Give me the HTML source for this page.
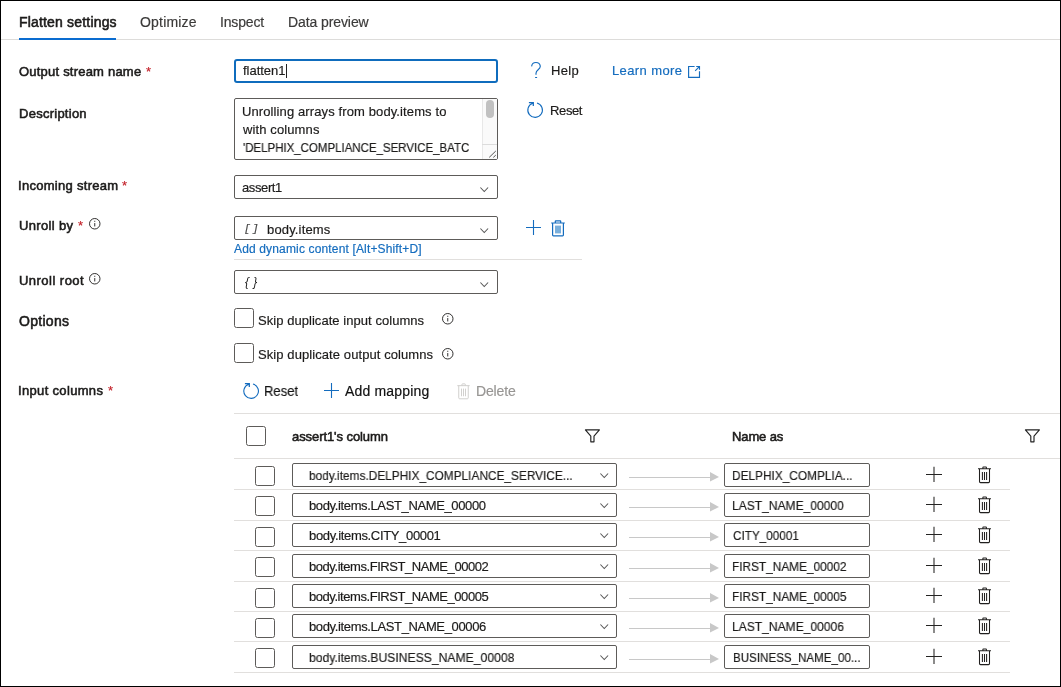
<!DOCTYPE html>
<html><head><meta charset="utf-8"><title>Flatten settings</title>
<style>
html,body{margin:0;padding:0;background:#fff;}
body{width:1061px;height:687px;position:relative;overflow:hidden;font-family:"Liberation Sans",sans-serif;}
.t{position:absolute;white-space:nowrap;line-height:1;will-change:transform;-webkit-text-stroke:0.18px currentColor;}
.s{-webkit-text-stroke:0.55px currentColor;}
.b{position:absolute;box-sizing:border-box;}
.box{border:1px solid #5d5b59;border-radius:2px;background:#fff;}
.ln{position:absolute;height:1px;background:#e1dfdd;}
svg{position:absolute;overflow:visible;}
</style></head><body>

<div class="b" style="left:0;top:0;width:1061px;height:687px;border:1px solid #000;z-index:5;pointer-events:none"></div>
<div class="ln" style="left:0;top:39px;width:1061px;background:#dddcda"></div>
<div class="b" style="left:19px;top:38px;width:97px;height:2px;background:#0a6cd0"></div>
<div class="b" style="left:234px;top:59px;width:264px;height:24px;border:2px solid #0f6cbd;border-radius:3px"></div>
<div class="b" style="left:286px;top:64px;width:1px;height:14px;background:#222"></div>
<div class="b box" style="left:234px;top:98px;width:264px;height:62px"></div>
<div class="b" style="left:482px;top:99px;width:15px;height:60px;background:#fafafa;border-left:1px solid #e8e8e8"></div>
<div class="b" style="left:486px;top:100px;width:8px;height:18px;background:#c1c1c1;border-radius:4px"></div>
<div class="b" style="left:482px;top:144px;width:15px;height:1px;background:#dcdcdc"></div>
<svg style="left:484px;top:146px" width="13" height="13"><path d="M5.2 11.4L11.8 5M9.3 11.4L11.8 9.1" stroke="#555" stroke-width="1" fill="none"/></svg>
<div class="b box" style="left:234px;top:175px;width:264px;height:24px"></div>
<svg style="left:479.6px;top:186.6px" width="9" height="6"><path d="M0.4 0.5L4.25 4.5L8.1 0.5" stroke="#555" stroke-width="1.05" fill="none"/></svg>
<div class="b box" style="left:234px;top:216px;width:264px;height:24px"></div>
<svg style="left:479.6px;top:227.6px" width="9" height="6"><path d="M0.4 0.5L4.25 4.5L8.1 0.5" stroke="#555" stroke-width="1.05" fill="none"/></svg>
<div class="b box" style="left:234px;top:270px;width:264px;height:24px"></div>
<svg style="left:479.6px;top:281.6px" width="9" height="6"><path d="M0.4 0.5L4.25 4.5L8.1 0.5" stroke="#555" stroke-width="1.05" fill="none"/></svg>
<div class="t" style="left:244.3px;top:223.2px;font:italic 11px 'Liberation Mono',monospace;color:#444;letter-spacing:1.5px">[]</div>
<div class="t" style="left:244.6px;top:274.6px;font:italic 12px 'Liberation Sans',sans-serif;color:#222;letter-spacing:4.3px;-webkit-text-stroke:0">{}</div>
<div class="ln" style="left:234px;top:259px;width:348px;"></div>
<svg style="left:526px;top:220px" width="15" height="15"><path d="M7.5 0V15M0 7.5H15" stroke="#146cbe" stroke-width="1.1" fill="none"/></svg>
<svg style="left:551px;top:219.5px" width="14" height="17"><path d="M0.2 3H13.8M4.3 2.8V1.3Q4.3 0.8 4.8 0.8H9.2Q9.7 0.8 9.7 1.3V2.8M1.6 3.2V15Q1.6 15.8 2.4 15.8H11.6Q12.4 15.8 12.4 15V3.2" stroke="#146cbe" stroke-width="1.2" fill="none"/><rect x="4" y="5.6" width="6" height="7.8" fill="#7aafdb"/></svg>
<svg style="left:88.9px;top:217.5px" width="11.5" height="11.5"><circle cx="5.75" cy="5.75" r="5.25" stroke="#323130" stroke-width="1" fill="none"/><path d="M5.75 5.05V8.45M5.75 2.75V3.85" stroke="#323130" stroke-width="1"/></svg>
<svg style="left:88.8px;top:272.8px" width="11.5" height="11.5"><circle cx="5.75" cy="5.75" r="5.25" stroke="#323130" stroke-width="1" fill="none"/><path d="M5.75 5.05V8.45M5.75 2.75V3.85" stroke="#323130" stroke-width="1"/></svg>
<svg style="left:442.3px;top:312.9px" width="11.5" height="11.5"><circle cx="5.75" cy="5.75" r="5.25" stroke="#323130" stroke-width="1" fill="none"/><path d="M5.75 5.05V8.45M5.75 2.75V3.85" stroke="#323130" stroke-width="1"/></svg>
<svg style="left:442.3px;top:348.1px" width="11.5" height="11.5"><circle cx="5.75" cy="5.75" r="5.25" stroke="#323130" stroke-width="1" fill="none"/><path d="M5.75 5.05V8.45M5.75 2.75V3.85" stroke="#323130" stroke-width="1"/></svg>
<div class="b box" style="left:234px;top:308px;width:20px;height:20px;border-radius:2.5px"></div>
<div class="b box" style="left:234px;top:343px;width:20px;height:20px;border-radius:2.5px"></div>
<div class="b box" style="left:246px;top:426px;width:20px;height:20px;border-radius:2.5px"></div>
<svg style="left:530px;top:61px" width="12" height="18"><path d="M1.6 5.3A4.4 4.4 0 0 1 10.3 5.2C10.3 8.6 6 8.9 6 12.2V13.7M5.1 16.5H7.1" stroke="#146cbe" stroke-width="1.15" fill="none"/></svg>
<svg style="left:688px;top:66px" width="13" height="12"><path d="M6.6 0.5H0.6V11.4H11.5V5.2M8.2 0.5H11.5V3.7M11.3 0.7L7.2 4.8" stroke="#146cbe" stroke-width="1.15" fill="none"/></svg>
<svg style="left:526.6px;top:101.9px" width="16" height="16" viewBox="0 0 16 16"><path d="M10 1A7.3 7.3 0 1 1 5.6 1.2" stroke="#146cbe" stroke-width="1.1" fill="none"/><path d="M1.9 0.65H6.3V4" stroke="#146cbe" stroke-width="1.25" fill="none"/><path d="M3.6 0.65H6.3V2.6Z" fill="#146cbe"/></svg>
<svg style="left:242.9px;top:382.8px" width="16" height="16" viewBox="0 0 16 16"><path d="M10 1A7.3 7.3 0 1 1 5.6 1.2" stroke="#146cbe" stroke-width="1.1" fill="none"/><path d="M1.9 0.65H6.3V4" stroke="#146cbe" stroke-width="1.25" fill="none"/><path d="M3.6 0.65H6.3V2.6Z" fill="#146cbe"/></svg>
<svg style="left:324px;top:383px" width="15" height="15"><path d="M7.5 0V15M0 7.5H15" stroke="#146cbe" stroke-width="1.1" fill="none"/></svg>
<svg style="left:456.8px;top:382.5px" width="13" height="16.2" viewBox="0 0 13 17"><path d="M0 2.8H13M4.9 2.8V1.4Q4.9 0.9 5.4 0.9H7.9Q8.4 0.9 8.4 1.4V2.8M1.5 2.8V15.6Q1.5 16.6 2.5 16.6H10.5Q11.5 16.6 11.5 15.6V2.8M4.4 5.9V13.9M6.5 5.9V13.9M8.6 5.9V13.9" stroke="#cfcdcb" stroke-width="1.0" fill="none"/></svg>
<div class="ln" style="left:234px;top:413px;width:827px"></div>
<div class="ln" style="left:234px;top:458px;width:827px"></div>
<svg style="left:584px;top:428.5px" width="17" height="14"><path d="M1.4 0.9H15.4L10 7.2V12.8H6.8V7.2Z" stroke="#222" stroke-width="1.15" fill="none" stroke-linejoin="round"/></svg>
<svg style="left:1024.2px;top:428.5px" width="17" height="14"><path d="M1.4 0.9H15.4L10 7.2V12.8H6.8V7.2Z" stroke="#222" stroke-width="1.15" fill="none" stroke-linejoin="round"/></svg>
<div class="ln" style="left:234px;top:489px;width:776px"></div>
<div class="b box" style="left:255px;top:466px;width:20px;height:20px;border-radius:2.5px"></div>
<div class="b box" style="left:292px;top:463px;width:325px;height:24px"></div>
<svg style="left:599.5px;top:473.3px" width="9" height="6"><path d="M0.4 0.5L4.25 4.5L8.1 0.5" stroke="#555" stroke-width="1.05" fill="none"/></svg>
<div class="b" style="left:629px;top:477px;width:82px;height:1px;background:#c8c8c8"></div>
<svg style="left:709.7px;top:472.4px" width="9" height="10"><path d="M0 0L9 4.9L0 9.6Z" fill="#c8c8c8"/></svg>
<div class="b box" style="left:724px;top:463px;width:146px;height:24px"></div>
<svg style="left:926px;top:466px" width="16" height="17"><path d="M8 0.8V16M0 8.5H16" stroke="#252423" stroke-width="1.05" fill="none"/></svg>
<svg style="left:978px;top:466px" width="13" height="17" viewBox="0 0 13 17"><path d="M0 2.8H13M4.9 2.8V1.4Q4.9 0.9 5.4 0.9H7.9Q8.4 0.9 8.4 1.4V2.8M1.5 2.8V15.6Q1.5 16.6 2.5 16.6H10.5Q11.5 16.6 11.5 15.6V2.8M4.4 5.9V13.9M6.5 5.9V13.9M8.6 5.9V13.9" stroke="#201f1e" stroke-width="1.05" fill="none"/></svg>
<div class="ln" style="left:234px;top:520px;width:776px"></div>
<div class="b box" style="left:255px;top:496px;width:20px;height:20px;border-radius:2.5px"></div>
<div class="b box" style="left:292px;top:493px;width:325px;height:24px"></div>
<svg style="left:599.5px;top:503.3px" width="9" height="6"><path d="M0.4 0.5L4.25 4.5L8.1 0.5" stroke="#555" stroke-width="1.05" fill="none"/></svg>
<div class="b" style="left:629px;top:507px;width:82px;height:1px;background:#c8c8c8"></div>
<svg style="left:709.7px;top:502.4px" width="9" height="10"><path d="M0 0L9 4.9L0 9.6Z" fill="#c8c8c8"/></svg>
<div class="b box" style="left:724px;top:493px;width:146px;height:24px"></div>
<svg style="left:926px;top:496px" width="16" height="17"><path d="M8 0.8V16M0 8.5H16" stroke="#252423" stroke-width="1.05" fill="none"/></svg>
<svg style="left:978px;top:496px" width="13" height="17" viewBox="0 0 13 17"><path d="M0 2.8H13M4.9 2.8V1.4Q4.9 0.9 5.4 0.9H7.9Q8.4 0.9 8.4 1.4V2.8M1.5 2.8V15.6Q1.5 16.6 2.5 16.6H10.5Q11.5 16.6 11.5 15.6V2.8M4.4 5.9V13.9M6.5 5.9V13.9M8.6 5.9V13.9" stroke="#201f1e" stroke-width="1.05" fill="none"/></svg>
<div class="ln" style="left:234px;top:550px;width:776px"></div>
<div class="b box" style="left:255px;top:527px;width:20px;height:20px;border-radius:2.5px"></div>
<div class="b box" style="left:292px;top:523px;width:325px;height:24px"></div>
<svg style="left:599.5px;top:533.3px" width="9" height="6"><path d="M0.4 0.5L4.25 4.5L8.1 0.5" stroke="#555" stroke-width="1.05" fill="none"/></svg>
<div class="b" style="left:629px;top:537px;width:82px;height:1px;background:#c8c8c8"></div>
<svg style="left:709.7px;top:532.4px" width="9" height="10"><path d="M0 0L9 4.9L0 9.6Z" fill="#c8c8c8"/></svg>
<div class="b box" style="left:724px;top:523px;width:146px;height:24px"></div>
<svg style="left:926px;top:526px" width="16" height="17"><path d="M8 0.8V16M0 8.5H16" stroke="#252423" stroke-width="1.05" fill="none"/></svg>
<svg style="left:978px;top:526px" width="13" height="17" viewBox="0 0 13 17"><path d="M0 2.8H13M4.9 2.8V1.4Q4.9 0.9 5.4 0.9H7.9Q8.4 0.9 8.4 1.4V2.8M1.5 2.8V15.6Q1.5 16.6 2.5 16.6H10.5Q11.5 16.6 11.5 15.6V2.8M4.4 5.9V13.9M6.5 5.9V13.9M8.6 5.9V13.9" stroke="#201f1e" stroke-width="1.05" fill="none"/></svg>
<div class="ln" style="left:234px;top:581px;width:776px"></div>
<div class="b box" style="left:255px;top:557px;width:20px;height:20px;border-radius:2.5px"></div>
<div class="b box" style="left:292px;top:554px;width:325px;height:24px"></div>
<svg style="left:599.5px;top:564.3px" width="9" height="6"><path d="M0.4 0.5L4.25 4.5L8.1 0.5" stroke="#555" stroke-width="1.05" fill="none"/></svg>
<div class="b" style="left:629px;top:568px;width:82px;height:1px;background:#c8c8c8"></div>
<svg style="left:709.7px;top:563.4px" width="9" height="10"><path d="M0 0L9 4.9L0 9.6Z" fill="#c8c8c8"/></svg>
<div class="b box" style="left:724px;top:554px;width:146px;height:24px"></div>
<svg style="left:926px;top:557px" width="16" height="17"><path d="M8 0.8V16M0 8.5H16" stroke="#252423" stroke-width="1.05" fill="none"/></svg>
<svg style="left:978px;top:557px" width="13" height="17" viewBox="0 0 13 17"><path d="M0 2.8H13M4.9 2.8V1.4Q4.9 0.9 5.4 0.9H7.9Q8.4 0.9 8.4 1.4V2.8M1.5 2.8V15.6Q1.5 16.6 2.5 16.6H10.5Q11.5 16.6 11.5 15.6V2.8M4.4 5.9V13.9M6.5 5.9V13.9M8.6 5.9V13.9" stroke="#201f1e" stroke-width="1.05" fill="none"/></svg>
<div class="ln" style="left:234px;top:611px;width:776px"></div>
<div class="b box" style="left:255px;top:588px;width:20px;height:20px;border-radius:2.5px"></div>
<div class="b box" style="left:292px;top:584px;width:325px;height:24px"></div>
<svg style="left:599.5px;top:594.3px" width="9" height="6"><path d="M0.4 0.5L4.25 4.5L8.1 0.5" stroke="#555" stroke-width="1.05" fill="none"/></svg>
<div class="b" style="left:629px;top:598px;width:82px;height:1px;background:#c8c8c8"></div>
<svg style="left:709.7px;top:593.4px" width="9" height="10"><path d="M0 0L9 4.9L0 9.6Z" fill="#c8c8c8"/></svg>
<div class="b box" style="left:724px;top:584px;width:146px;height:24px"></div>
<svg style="left:926px;top:587px" width="16" height="17"><path d="M8 0.8V16M0 8.5H16" stroke="#252423" stroke-width="1.05" fill="none"/></svg>
<svg style="left:978px;top:587px" width="13" height="17" viewBox="0 0 13 17"><path d="M0 2.8H13M4.9 2.8V1.4Q4.9 0.9 5.4 0.9H7.9Q8.4 0.9 8.4 1.4V2.8M1.5 2.8V15.6Q1.5 16.6 2.5 16.6H10.5Q11.5 16.6 11.5 15.6V2.8M4.4 5.9V13.9M6.5 5.9V13.9M8.6 5.9V13.9" stroke="#201f1e" stroke-width="1.05" fill="none"/></svg>
<div class="ln" style="left:234px;top:641px;width:776px"></div>
<div class="b box" style="left:255px;top:618px;width:20px;height:20px;border-radius:2.5px"></div>
<div class="b box" style="left:292px;top:614px;width:325px;height:24px"></div>
<svg style="left:599.5px;top:624.3px" width="9" height="6"><path d="M0.4 0.5L4.25 4.5L8.1 0.5" stroke="#555" stroke-width="1.05" fill="none"/></svg>
<div class="b" style="left:629px;top:628px;width:82px;height:1px;background:#c8c8c8"></div>
<svg style="left:709.7px;top:623.4px" width="9" height="10"><path d="M0 0L9 4.9L0 9.6Z" fill="#c8c8c8"/></svg>
<div class="b box" style="left:724px;top:614px;width:146px;height:24px"></div>
<svg style="left:926px;top:617px" width="16" height="17"><path d="M8 0.8V16M0 8.5H16" stroke="#252423" stroke-width="1.05" fill="none"/></svg>
<svg style="left:978px;top:617px" width="13" height="17" viewBox="0 0 13 17"><path d="M0 2.8H13M4.9 2.8V1.4Q4.9 0.9 5.4 0.9H7.9Q8.4 0.9 8.4 1.4V2.8M1.5 2.8V15.6Q1.5 16.6 2.5 16.6H10.5Q11.5 16.6 11.5 15.6V2.8M4.4 5.9V13.9M6.5 5.9V13.9M8.6 5.9V13.9" stroke="#201f1e" stroke-width="1.05" fill="none"/></svg>
<div class="ln" style="left:234px;top:672px;width:776px"></div>
<div class="b box" style="left:255px;top:648px;width:20px;height:20px;border-radius:2.5px"></div>
<div class="b box" style="left:292px;top:645px;width:325px;height:24px"></div>
<svg style="left:599.5px;top:655.3px" width="9" height="6"><path d="M0.4 0.5L4.25 4.5L8.1 0.5" stroke="#555" stroke-width="1.05" fill="none"/></svg>
<div class="b" style="left:629px;top:659px;width:82px;height:1px;background:#c8c8c8"></div>
<svg style="left:709.7px;top:654.4px" width="9" height="10"><path d="M0 0L9 4.9L0 9.6Z" fill="#c8c8c8"/></svg>
<div class="b box" style="left:724px;top:645px;width:146px;height:24px"></div>
<svg style="left:926px;top:648px" width="16" height="17"><path d="M8 0.8V16M0 8.5H16" stroke="#252423" stroke-width="1.05" fill="none"/></svg>
<svg style="left:978px;top:648px" width="13" height="17" viewBox="0 0 13 17"><path d="M0 2.8H13M4.9 2.8V1.4Q4.9 0.9 5.4 0.9H7.9Q8.4 0.9 8.4 1.4V2.8M1.5 2.8V15.6Q1.5 16.6 2.5 16.6H10.5Q11.5 16.6 11.5 15.6V2.8M4.4 5.9V13.9M6.5 5.9V13.9M8.6 5.9V13.9" stroke="#201f1e" stroke-width="1.05" fill="none"/></svg>
<div id="t0" class="t s" style="left:18.90px;top:15.25px;font-size:14px;color:#1c1b1a;letter-spacing:0.178px;">Flatten settings</div>
<div id="t1" class="t" style="left:139.90px;top:15.25px;font-size:14px;color:#3b3a39;letter-spacing:0.195px;">Optimize</div>
<div id="t2" class="t" style="left:220.30px;top:15.25px;font-size:14px;color:#3b3a39;letter-spacing:-0.157px;">Inspect</div>
<div id="t3" class="t" style="left:288.30px;top:15.25px;font-size:14px;color:#3b3a39;letter-spacing:-0.092px;">Data preview</div>
<div id="t4" class="t s" style="left:18.90px;top:65.40px;font-size:13px;color:#1c1b1a;letter-spacing:0.213px;">Output stream name</div>
<div id="t5" class="t s" style="left:18.70px;top:106.50px;font-size:13px;color:#1c1b1a;letter-spacing:0.257px;">Description</div>
<div id="t6" class="t s" style="left:17.78px;top:179.30px;font-size:13px;color:#1c1b1a;letter-spacing:0.290px;">Incoming stream</div>
<div id="t7" class="t s" style="left:18.55px;top:219.00px;font-size:13px;color:#1c1b1a;letter-spacing:0.342px;">Unroll by</div>
<div id="t8" class="t s" style="left:18.55px;top:274.30px;font-size:13px;color:#1c1b1a;letter-spacing:0.471px;">Unroll root</div>
<div id="t9" class="t s" style="left:19.27px;top:313.65px;font-size:14px;color:#1c1b1a;letter-spacing:0.291px;">Options</div>
<div id="t10" class="t s" style="left:17.78px;top:384.30px;font-size:13px;color:#1c1b1a;letter-spacing:0.332px;">Input columns</div>
<div id="t11" class="t" style="left:146.10px;top:65.40px;font-size:13px;color:#c4262e;letter-spacing:0.000px;">*</div>
<div id="t12" class="t" style="left:122.30px;top:179.30px;font-size:13px;color:#c4262e;letter-spacing:0.000px;">*</div>
<div id="t13" class="t" style="left:78.30px;top:219.00px;font-size:13px;color:#c4262e;letter-spacing:0.000px;">*</div>
<div id="t14" class="t" style="left:107.60px;top:384.30px;font-size:13px;color:#c4262e;letter-spacing:0.000px;">*</div>
<div id="t15" class="t" style="left:242.57px;top:64.40px;font-size:13px;color:#1c1b1a;letter-spacing:-0.031px;">flatten1</div>
<div id="t16" class="t" style="left:241.77px;top:104.60px;font-size:13px;color:#1c1b1a;letter-spacing:0.111px;">Unrolling arrays from body.items to</div>
<div id="t17" class="t" style="left:243.20px;top:122.70px;font-size:13px;color:#1c1b1a;letter-spacing:0.116px;">with columns</div>
<div id="t18" class="t" style="left:242.80px;top:140.70px;font-size:13px;color:#1c1b1a;letter-spacing:0.000px;transform:scaleX(0.8829);transform-origin:0 0;">'DELPHIX_COMPLIANCE_SERVICE_BATC</div>
<div id="t19" class="t" style="left:242.20px;top:181.10px;font-size:13px;color:#1c1b1a;letter-spacing:-0.390px;">assert1</div>
<div id="t20" class="t" style="left:266.65px;top:222.80px;font-size:13px;color:#1c1b1a;letter-spacing:0.153px;">body.items</div>
<div id="t21" class="t" style="left:233.65px;top:242.54px;font-size:12px;color:#146cbe;letter-spacing:0.152px;">Add dynamic content [Alt+Shift+D]</div>
<div id="t22" class="t" style="left:257.80px;top:313.70px;font-size:13px;color:#1c1b1a;letter-spacing:0.049px;">Skip duplicate input columns</div>
<div id="t23" class="t" style="left:257.80px;top:348.40px;font-size:13px;color:#1c1b1a;letter-spacing:0.085px;">Skip duplicate output columns</div>
<div id="t24" class="t" style="left:551.24px;top:63.90px;font-size:13px;color:#1c1b1a;letter-spacing:0.337px;">Help</div>
<div id="t25" class="t" style="left:611.80px;top:63.90px;font-size:13px;color:#146cbe;letter-spacing:0.391px;">Learn more</div>
<div id="t26" class="t" style="left:550.16px;top:103.50px;font-size:13px;color:#1c1b1a;letter-spacing:-0.369px;">Reset</div>
<div id="t27" class="t" style="left:264.10px;top:383.85px;font-size:14px;color:#111;letter-spacing:0.000px;transform:scaleX(0.9300);transform-origin:0 0;">Reset</div>
<div id="t28" class="t" style="left:345.13px;top:383.85px;font-size:14px;color:#111;letter-spacing:0.181px;">Add mapping</div>
<div id="t29" class="t" style="left:475.80px;top:384.05px;font-size:14px;color:#979593;letter-spacing:-0.154px;">Delete</div>
<div id="t30" class="t s" style="left:291.53px;top:429.60px;font-size:13px;color:#1c1b1a;letter-spacing:-0.075px;">assert1's column</div>
<div id="t31" class="t s" style="left:731.56px;top:429.50px;font-size:13px;color:#1c1b1a;letter-spacing:-0.114px;">Name as</div>
<div id="t32" class="t" style="left:308.65px;top:469.00px;font-size:13px;color:#1c1b1a;letter-spacing:0.000px;transform:scaleX(0.9117);transform-origin:0 0;">body.items.DELPHIX_COMPLIANCE_SERVICE...</div>
<div id="t33" class="t" style="left:731.98px;top:469.00px;font-size:13px;color:#1c1b1a;letter-spacing:0.000px;transform:scaleX(0.9119);transform-origin:0 0;">DELPHIX_COMPLIA...</div>
<div id="t34" class="t" style="left:308.68px;top:499.00px;font-size:13px;color:#1c1b1a;letter-spacing:-0.365px;">body.items.LAST_NAME_00000</div>
<div id="t35" class="t" style="left:731.98px;top:499.00px;font-size:13px;color:#1c1b1a;letter-spacing:0.000px;transform:scaleX(0.9260);transform-origin:0 0;">LAST_NAME_00000</div>
<div id="t36" class="t" style="left:308.80px;top:529.00px;font-size:13px;color:#1c1b1a;letter-spacing:-0.335px;">body.items.CITY_00001</div>
<div id="t37" class="t" style="left:732.52px;top:529.00px;font-size:13px;color:#1c1b1a;letter-spacing:0.000px;transform:scaleX(0.9030);transform-origin:0 0;">CITY_00001</div>
<div id="t38" class="t" style="left:308.65px;top:560.00px;font-size:13px;color:#1c1b1a;letter-spacing:-0.441px;">body.items.FIRST_NAME_00002</div>
<div id="t39" class="t" style="left:732.16px;top:560.00px;font-size:13px;color:#1c1b1a;letter-spacing:0.000px;transform:scaleX(0.9106);transform-origin:0 0;">FIRST_NAME_00002</div>
<div id="t40" class="t" style="left:308.65px;top:590.00px;font-size:13px;color:#1c1b1a;letter-spacing:-0.443px;">body.items.FIRST_NAME_00005</div>
<div id="t41" class="t" style="left:732.16px;top:590.00px;font-size:13px;color:#1c1b1a;letter-spacing:0.000px;transform:scaleX(0.9104);transform-origin:0 0;">FIRST_NAME_00005</div>
<div id="t42" class="t" style="left:308.80px;top:620.00px;font-size:13px;color:#1c1b1a;letter-spacing:-0.356px;">body.items.LAST_NAME_00006</div>
<div id="t43" class="t" style="left:731.98px;top:620.00px;font-size:13px;color:#1c1b1a;letter-spacing:0.000px;transform:scaleX(0.9273);transform-origin:0 0;">LAST_NAME_00006</div>
<div id="t44" class="t" style="left:308.80px;top:651.00px;font-size:13px;color:#1c1b1a;letter-spacing:0.000px;transform:scaleX(0.9362);transform-origin:0 0;">body.items.BUSINESS_NAME_00008</div>
<div id="t45" class="t" style="left:732.70px;top:651.00px;font-size:13px;color:#1c1b1a;letter-spacing:0.000px;transform:scaleX(0.8917);transform-origin:0 0;">BUSINESS_NAME_00...</div>
</body></html>
